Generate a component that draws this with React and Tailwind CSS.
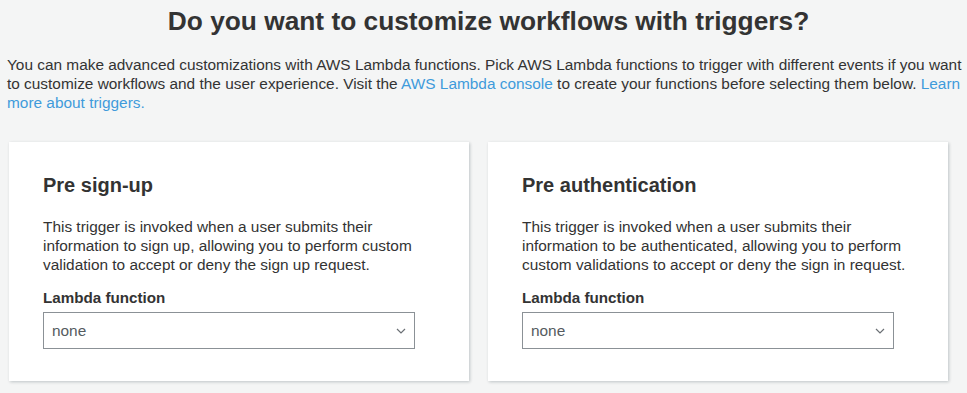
import React from 'react';

const triggers = [
    {
        title: 'Pre sign-up',
        text: 'This trigger is invoked when a user submits their information to sign up, allowing you to perform custom validation to accept or deny the sign up request.',
    },
    {
        title: 'Pre authentication',
        text: 'This trigger is invoked when a user submits their information to be authenticated, allowing you to perform custom validations to accept or deny the sign in request.',
    },
];

const Chevron = () => (
    <svg width="10" height="6" viewBox="0 0 10 6" fill="none" className="shrink-0">
        <path d="M1 1l4 4 4-4" stroke="#6b7075" strokeWidth="1.2" />
    </svg>
);

const TriggerCard = ({ title, text }) => (
    <div className="w-[460px] bg-white shadow-[1px_1px_3px_rgba(0,28,36,0.22)] pt-[31px] pb-[32px] px-[34px]">
        <h3 className="text-[20px] leading-[24px] font-bold">{title}</h3>
        <p className="mt-[20px] text-[15.4px] leading-[19px]">{text}</p>
        <div className="mt-[14px] text-[15.2px] leading-[19px] font-bold">Lambda function</div>
        <div className="mt-[5px] w-[372px] h-[37px] border border-[#8b9196] flex items-center justify-between pl-[8px] pr-[8px]">
            <span className="text-[15.4px] text-[#555b60]">none</span>
            <Chevron />
        </div>
    </div>
);

const App = () => {
    return (
        <div className="min-h-screen bg-[#f4f5f5] text-[#333333] font-['Liberation_Sans',Arial,sans-serif] pt-[5px]">
            {/* Header */}
            <h1 className="text-center text-[26.3px] leading-[32px] font-bold pl-[10px]">
                Do you want to customize workflows with triggers?
            </h1>
            <p className="mt-[18px] pl-[7px] pr-[2px] text-[15.4px] leading-[19px]">
                You can make advanced customizations with AWS Lambda functions. Pick AWS Lambda functions to trigger with different events if you want to customize workflows and the user experience. Visit the{' '}
                <a className="text-[#3f9bdb]">AWS Lambda console</a> to create your functions before selecting them below.{' '}
                <a className="text-[#3f9bdb]">Learn more about triggers.</a>
            </p>

            {/* Trigger cards */}
            <div className="mt-[30px] pl-[9px] flex gap-[19px]">
                {triggers.map((t) => (
                    <TriggerCard key={t.title} {...t} />
                ))}
            </div>
        </div>
    );
};

export default App;
